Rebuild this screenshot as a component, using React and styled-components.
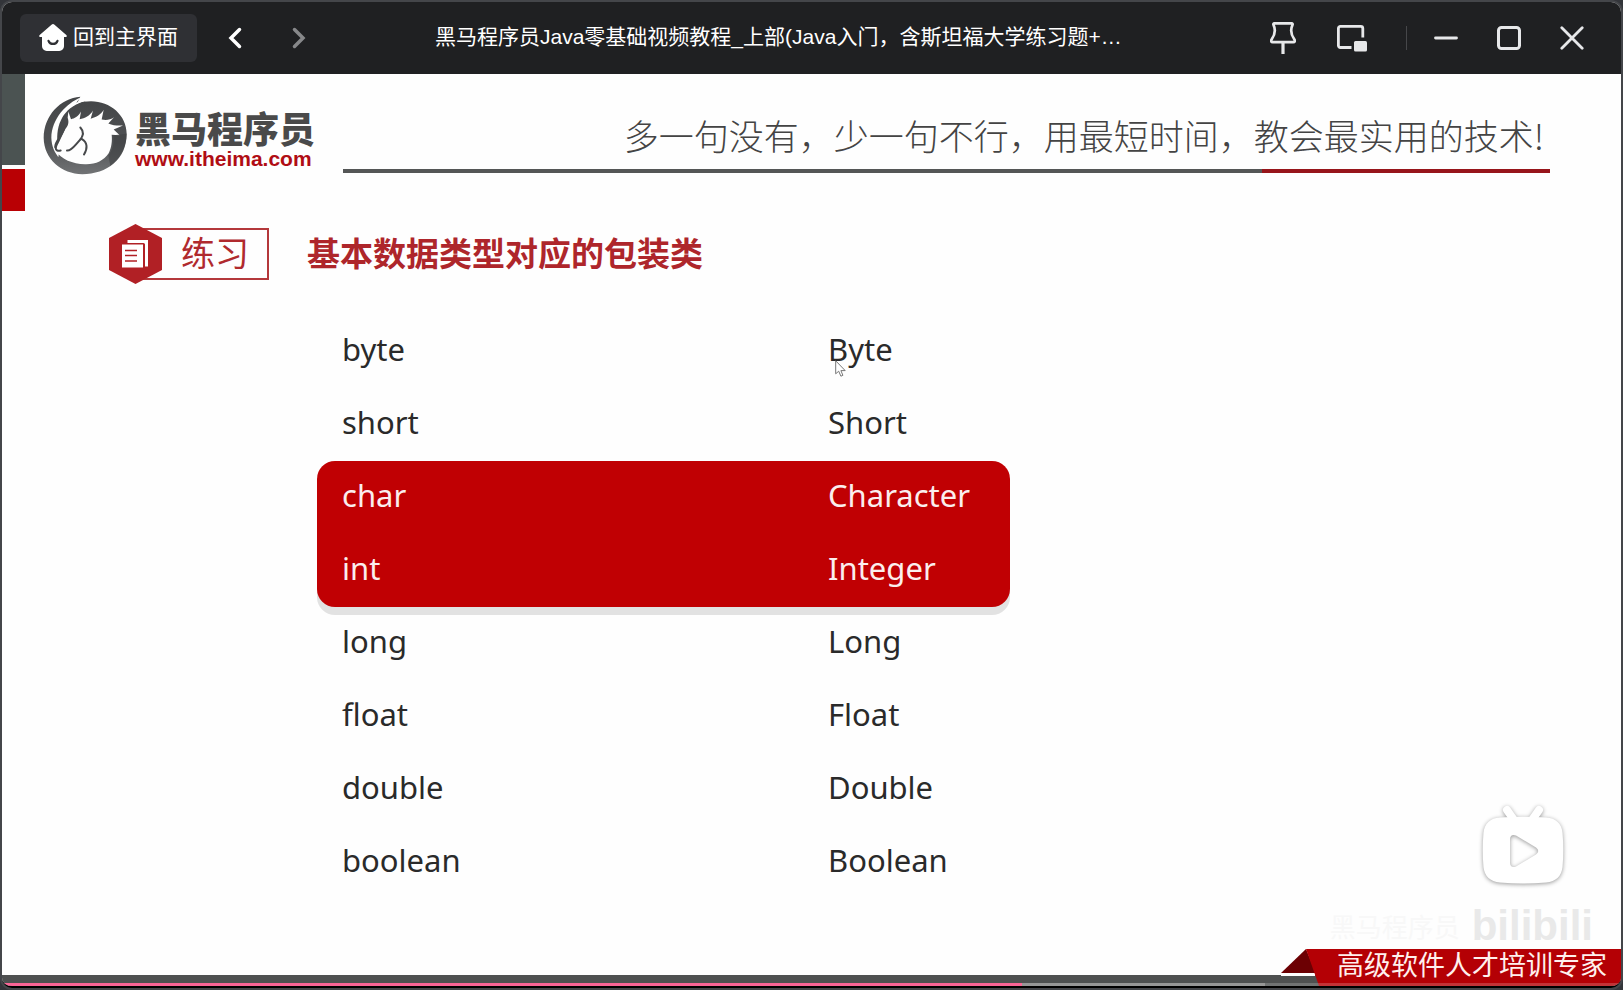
import React from "react";
import styled, { createGlobalStyle } from "styled-components";

const sans = `"Liberation Sans", "Noto Sans CJK SC", sans-serif`;
const cjk = `"Noto Sans CJK SC", sans-serif`;

const GlobalStyle = createGlobalStyle`
  * { box-sizing: border-box; }
  body { margin: 0; background: #33353a; font-family: ${sans}; }
  button { border: 0; padding: 0; background: none; color: inherit; font: inherit; cursor: pointer; }
  svg { display: block; }
`;

const Frame = styled.div`
  min-height: 100vh;
  display: flex;
  padding: 2px;
  background: #44464a;
  border-radius: 12px;
`;

const Window = styled.div`
  position: relative;
  flex: 1;
  min-width: 0;
  display: flex;
  flex-direction: column;
  overflow: hidden;
  background: #fefefe;
  border-bottom: 2px solid #000;
  border-radius: 10px;
`;

const TitleBar = styled.header`
  display: flex;
  align-items: center;
  height: 72px;
  padding: 0 25px 0 18px;
  background: #1f2022;
  color: #fff;
  font-size: 21px;
  line-height: 28px;
`;

const HomeButton = styled.button`
  display: flex;
  align-items: center;
  gap: 6px;
  height: 48px;
  padding: 0 19px;
  border-radius: 6px;
  background: #2f3034;
  white-space: nowrap;
  flex: none;
`;

const HomeLabel = styled.span`
  padding-bottom: 2px;
`;

const NavGroup = styled.nav`
  display: flex;
  gap: 24px;
  margin-left: 18px;
`;

const IconButton = styled.button`
  display: flex;
  align-items: center;
  justify-content: center;
  flex: none;
  width: ${(p) => (p.$wide ? 48 : 40)}px;
  height: 48px;
  color: ${(p) => (p.disabled ? "#87888a" : "#e7e8ea")};
`;

const Title = styled.h1`
  flex: 1;
  min-width: 0;
  margin: 0;
  padding: 0 24px 2px 116px;
  overflow: hidden;
  text-overflow: ellipsis;
  white-space: nowrap;
  font-size: 21px;
  font-weight: 400;
`;

const ToolGroup = styled.div`
  display: flex;
  gap: ${(p) => p.$gap}px;
`;

const Divider = styled.span`
  width: 1px;
  height: 24px;
  margin: 0 15px 0 30px;
  background: #46474a;
`;

const Slide = styled.main`
  flex: 1;
  display: flex;
`;

const Strip = styled.div`
  width: 23px;
  flex: none;
  display: flex;
  flex-direction: column;
  gap: 4px;
`;

const StripBlock = styled.span`
  height: ${(p) => p.$height}px;
  background: ${(p) => p.$color};
`;

const Content = styled.div`
  flex: 1;
  min-width: 0;
`;

const Banner = styled.div`
  display: flex;
  align-items: flex-end;
  gap: 28px;
  padding: 22px 71px 0 18px;
`;

const Brand = styled.div`
  display: flex;
  align-items: flex-end;
  gap: 8px;
`;

const BrandText = styled.div`
  display: flex;
  flex-direction: column;
  padding-bottom: 4px;
  white-space: nowrap;
`;

const BrandName = styled.span`
  color: #4a4a4a;
  font: 900 36px/40px ${cjk};
`;

const BrandLink = styled.a`
  color: #b00d14;
  font-size: 21px;
  font-weight: 700;
  line-height: 24px;
  text-decoration: none;
`;

const MottoColumn = styled.div`
  flex: 1;
  display: flex;
  flex-direction: column;
  gap: 14px;
  padding-bottom: 2px;
`;

const Motto = styled.p`
  margin: 0;
  padding-right: 6px;
  color: #444;
  font: 300 35px/40px ${cjk};
  text-align: right;
  white-space: nowrap;
`;

const Rule = styled.div`
  height: 4px;
  border-right: 288px solid #97151b;
  background: #545656;
`;

const Heading = styled.div`
  display: flex;
  align-items: center;
  gap: 38px;
  margin: 49px 0 31px 84px;
`;

const Tag = styled.div`
  display: flex;
  align-items: center;
  height: 60px;
`;

const TagLabel = styled.span`
  height: 52px;
  margin-left: -27px;
  padding: 0 18px 0 44px;
  border: 2px solid #b4383b;
  color: #b02a2e;
  font: 400 34px/44px ${cjk};
`;

const HexIcon = styled.svg`
  position: relative;
  z-index: 1;
`;

const Topic = styled.h2`
  margin: 0;
  padding-bottom: 4px;
  color: #ae262b;
  font: 700 33px/44px ${cjk};
`;

const TypeTable = styled.table`
  display: block;
  width: 693px;
  max-width: calc(100% - 292px);
  margin-left: 292px;
  font: 400 31px/40px "Noto Sans", sans-serif;
`;

const TypeGroup = styled.tbody`
  display: block;
  border-radius: 18px;
  color: ${(p) => (p.$active ? "#fbeeee" : "#2a2a2a")};
  background: ${(p) => (p.$active ? "#c00003" : "none")};
  box-shadow: ${(p) => (p.$active ? "0 8px 0 #e2e2e2" : "none")};
`;

const TypeRow = styled.tr`
  display: flex;
  align-items: center;
  height: 73px;
  padding: 0 0 5px 25px;
`;

const TypeCell = styled.td`
  position: relative;
  flex: ${(p) => (p.$first ? "0 1 486px" : "1")};
  padding: 0;
`;

const Pointer = styled.svg`
  position: absolute;
  left: 7px;
  top: 31px;
`;

const Footer = styled.footer`
  display: flex;
  justify-content: flex-end;
  background: linear-gradient(#4e5050, #4e5050) bottom / 100% 11px no-repeat;
`;

const Ribbon = styled.div`
  display: flex;
  height: 37px;
`;

const RibbonText = styled.span`
  padding: 0 14px 0 18px;
  background: #b40005;
  color: #fff0ee;
  font: 400 27px/30px ${cjk};
`;

const Progress = styled.input`
  appearance: none;
  position: absolute;
  left: 0;
  bottom: 0;
  width: 100%;
  height: 3px;
  margin: 0;
  background: linear-gradient(
    to right,
    #fb6496 ${(p) => p.$played}%,
    #979797 ${(p) => p.$played}% ${(p) => p.$buffered}%,
    rgba(255, 255, 255, 0.2) ${(p) => p.$buffered}%
  );
  &::-webkit-slider-thumb {
    appearance: none;
    width: 0;
    height: 0;
  }
`;

const PlayButton = styled.button`
  position: absolute;
  right: 57px;
  bottom: 102px;
  filter: drop-shadow(0 1px 2px rgba(0, 0, 0, 0.4));
`;

const Watermark = styled.div`
  position: absolute;
  right: 28px;
  bottom: 37px;
  display: flex;
  align-items: center;
  gap: 12px;
  white-space: nowrap;
`;

const WatermarkName = styled.span`
  color: #f8f8f8;
  font: 400 26px/32px ${cjk};
`;

const WatermarkLogo = styled.span`
  color: #e9e9e9;
  font-size: 42px;
  font-weight: 700;
  line-height: 46px;
`;

const types = [
  { rows: [["byte", "Byte"], ["short", "Short"]] },
  { active: true, rows: [["char", "Character"], ["int", "Integer"]] },
  { rows: [["long", "Long"], ["float", "Float"], ["double", "Double"], ["boolean", "Boolean"]] },
];

function HorseLogo() {
  return (
    <svg width="84" height="79" viewBox="14 17 252 236" aria-hidden="true">
      <defs>
        <linearGradient id="ring" x1="0" y1="0" x2="0" y2="1">
          <stop offset="0" stopColor="#434547" />
          <stop offset="0.6" stopColor="#505254" />
          <stop offset="1" stopColor="#717375" />
        </linearGradient>
      </defs>
      <path fill="url(#ring)" d="M126 19C66 24 17 75 16 142C17 207 70 251 132 251C206 251 265 207 265 130C265 74 216 32 158 32C142 32 128 34 116 39Z" />
      <path fill="#fefefe" d="M128 20C84 38 40 84 39 142C40 168 48 184 60 200L64 174C50 118 70 56 140 31L114 36Z" />
      <path fill="#47494b" d="M142 33C84 44 54 92 57 150L48 170L56 182L96 120L110 50Z" />
      <path fill="#fefefe" d="M90 63L98 86C108 84 120 78 128 63L124 86C140 84 154 76 164 60L157 85C174 80 188 72 196 58L190 87C204 90 216 88 227 80L210 99C224 105 238 106 254 105L226 117L244 134L220 133C222 150 220 172 211 188C196 210 172 222 140 221C102 220 70 206 52 182L57 166C66 150 72 130 82 114C91 104 92 94 88 82Z" />
      <path fill="none" stroke="#47494b" strokeWidth="6" strokeLinecap="round" d="M78 112C72 138 50 152 51 168C52 182 60 182 67 180M86 180C102 182 114 156 130 144M126 111C138 124 134 138 124 149M131 146C148 156 148 174 137 192" />
      <path fill="#3f4143" opacity="0.6" d="M225 134L265 130C264 172 244 206 216 226L210 194C224 176 228 158 225 134Z" />
    </svg>
  );
}

export default function App() {
  return (
    <>
      <GlobalStyle />
      <Frame>
        <Window>
          <TitleBar>
            <HomeButton type="button">
              <svg width="28" height="28" viewBox="0 0 28 28" aria-hidden="true">
                <path fill="#fff" d="M12.5.7a2.3 2.3 0 0 1 3 0L27.3 11c.9.8.5 2-.7 2H25v9.300a4.700 4.700 0 0 1-4.700 4.700H7.700A4.700 4.700 0 0 1 3 22.300V13H1.400C.2 13-.2 11.800.7 11Z" />
                <path fill="none" stroke="#2f3034" strokeWidth="2.200" strokeLinecap="round" d="M9.500 16.800c1.500 4.200 7.500 4.200 9 0" />
              </svg>
              <HomeLabel>回到主界面</HomeLabel>
            </HomeButton>
            <NavGroup aria-label="导航">
              <IconButton type="button" aria-label="后退">
                <svg width="14" height="22" viewBox="0 0 14 22" fill="none" stroke="#fff" strokeWidth="3.500" strokeLinecap="round"><path d="M11.500 2.500 3 11l8.500 8.500" /></svg>
              </IconButton>
              <IconButton type="button" aria-label="前进" disabled>
                <svg width="14" height="22" viewBox="0 0 14 22" fill="none" stroke="currentColor" strokeWidth="3.500" strokeLinecap="round"><path d="M2.500 2.500 11 11l-8.500 8.500" /></svg>
              </IconButton>
            </NavGroup>
            <Title>黑马程序员Java零基础视频教程_上部(Java入门，含斯坦福大学练习题+…</Title>
            <ToolGroup $gap={21}>
              <IconButton $wide type="button" aria-label="置顶">
                <svg width="26" height="32" viewBox="0 0 26 32" fill="none" stroke="currentColor" strokeWidth="2.700" strokeLinejoin="round"><path d="M4.300 1.400h17.400c.8 0 1.200.7.800 1.400-2.400 5-1.800 9.400 1.900 14.800.9 1.400.4 2.600-1.200 2.600H2.800c-1.600 0-2.100-1.200-1.200-2.600C5.300 12.200 5.900 7.800 3.500 2.800c-.4-.7 0-1.400.8-1.400Z" /><path strokeWidth="3.200" d="M13 20v12" /></svg>
              </IconButton>
              <IconButton $wide type="button" aria-label="小窗播放">
                <svg width="30" height="27" viewBox="0 0 30 27" fill="none" stroke="currentColor" strokeWidth="2.800"><path d="M14.500 22.500H3.400a2 2 0 0 1-2-2V3.400a2 2 0 0 1 2-2h20.400a2 2 0 0 1 2 2V12.500" /><rect x="17" y="16" width="13" height="10.500" rx="1.500" fill="currentColor" stroke="none" /></svg>
              </IconButton>
            </ToolGroup>
            <Divider />
            <ToolGroup $gap={15}>
              <IconButton $wide type="button" aria-label="最小化">
                <svg width="24" height="24" viewBox="0 0 24 24" stroke="currentColor" strokeWidth="2.800" strokeLinecap="round"><path d="M1.500 12h21" /></svg>
              </IconButton>
              <IconButton $wide type="button" aria-label="最大化">
                <svg width="24" height="24" viewBox="0 0 24 24" fill="none" stroke="currentColor" strokeWidth="3"><rect x="1.500" y="1.500" width="21" height="21" rx="3" /></svg>
              </IconButton>
              <IconButton $wide type="button" aria-label="关闭">
                <svg width="24" height="24" viewBox="0 0 24 24" stroke="currentColor" strokeWidth="2.800" strokeLinecap="round"><path d="m1.800 1.800 20.400 20.400m0-20.400L1.800 22.200" /></svg>
              </IconButton>
            </ToolGroup>
          </TitleBar>

          <Slide>
            <Strip>
              <StripBlock $height={91} $color="#4b5352" />
              <StripBlock $height={42} $color="#b90004" />
            </Strip>
            <Content>
              <Banner>
                <Brand>
                  <HorseLogo />
                  <BrandText>
                    <BrandName>黑马程序员</BrandName>
                    <BrandLink href="#home">www.itheima.com</BrandLink>
                  </BrandText>
                </Brand>
                <MottoColumn>
                  <Motto>多一句没有，少一句不行，用最短时间，教会最实用的技术!</Motto>
                  <Rule />
                </MottoColumn>
              </Banner>

              <Heading>
                <Tag>
                  <HexIcon width="53" height="60" viewBox="0 0 53 60" aria-hidden="true">
                    <path fill="#b12025" d="M26.500 0 53 14v32L26.500 60 0 46V14Z" />
                    <path fill="#fff" d="M18.500 16H39v26.500H36V20.500a1.500 1.500 0 0 0-1.500-1.500h-16Z" />
                    <path fill="#fff" d="M13 20.500h21v23H13Z" />
                    <path stroke="#b12025" strokeWidth="1.500" d="M16 26.500h12M16 31.500h12M16 37h12" />
                  </HexIcon>
                  <TagLabel>练习</TagLabel>
                </Tag>
                <Topic>基本数据类型对应的包装类</Topic>
              </Heading>

              <TypeTable>
                {types.map((group) => (
                  <TypeGroup key={group.rows[0][0]} $active={group.active}>
                    {group.rows.map(([primitive, wrapper]) => (
                      <TypeRow key={primitive}>
                        <TypeCell $first>{primitive}</TypeCell>
                        <TypeCell>
                          {wrapper}
                          {wrapper === "Byte" && (
                            <Pointer width="12" height="17" viewBox="0 0 12 17" aria-hidden="true">
                              <path fill="#fff" stroke="#777" d="M.7.8v13l3-2.600 2.200 5 2-.9-2-4.700h4.300Z" />
                            </Pointer>
                          )}
                        </TypeCell>
                      </TypeRow>
                    ))}
                  </TypeGroup>
                ))}
              </TypeTable>
            </Content>
          </Slide>

          <Footer>
            <Ribbon>
              <svg width="38" height="37" viewBox="0 0 38 37" aria-hidden="true">
                <path fill="#fefefe" d="M0 24h34v3H0Z" />
                <path fill="#6c0003" d="M0 24 25 0l10 24Z" />
                <path fill="#b40005" d="M25 0H38V37Z" />
              </svg>
              <RibbonText>高级软件人才培训专家</RibbonText>
            </Ribbon>
          </Footer>

          <PlayButton type="button" aria-label="播放">
            <svg width="82" height="78" viewBox="0 0 82 78" overflow="visible">
              <path stroke="#fff" strokeWidth="8" strokeLinecap="round" d="m25 4 7 10M57 4l-7 10" />
              <path fill="#fff" fillRule="evenodd" d="M18 11.500Q41 10 64 11.500Q79 12.500 80.500 27Q82 44 80.500 61Q79 75 64 76.500Q41 78.500 18 76.500Q3 75 1.500 61Q0 44 1.500 27Q3 12.500 18 11.500ZM28 33V57Q28.500 62.500 34 60.500L54 48.500Q58.500 45 54 41.500L34 29.500Q28.500 27.500 28 33Z" />
            </svg>
          </PlayButton>
          <Watermark aria-hidden="true">
            <WatermarkName>黑马程序员</WatermarkName>
            <WatermarkLogo>bilibili</WatermarkLogo>
          </Watermark>
          <Progress type="range" aria-label="播放进度" min="0" max="1000" defaultValue="629" $played={63} $buffered={78} />
        </Window>
      </Frame>
    </>
  );
}
